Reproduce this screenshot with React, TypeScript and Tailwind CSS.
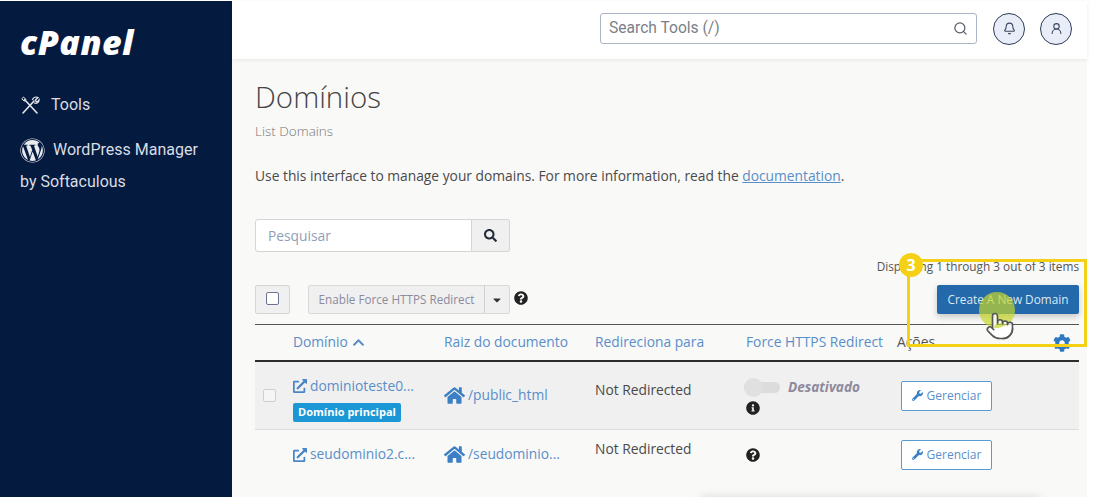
import React from 'react';
import { Bell, Pointer, Search, UserRound } from 'lucide-react';
import { FaCaretDown, FaChevronUp, FaCog, FaExternalLinkAlt, FaHome, FaInfoCircle, FaQuestionCircle, FaSearch, FaWordpress, FaWrench } from 'react-icons/fa';

const ToolsIcon = () => (
  <svg width="20" height="20" viewBox="0 0 20 20" fill="none" stroke="#e5e7eb" strokeWidth="1.6" strokeLinecap="round">
    <path d="M3 18 L14 6" />
    <path d="M12.5 4.5 C13.5 2.5 16 1.5 18 2.5 L15.5 5 L16 6.5 L17.5 7 L19 5 C19 7.5 16.5 9 14.5 8" strokeWidth="1.3" />
    <path d="M4.5 4.5 L17 18" />
    <path d="M2 3.5 L3.5 2 L6 4.5 L4.5 6 Z" strokeWidth="1" />
  </svg>
);

const Gerenciar = () => (
  <button className="flex h-[30px] w-[91px] items-center justify-center gap-1 rounded-[2px] border-[1.5px] border-[#5b9bd5] bg-white text-[12px] text-[#5a8ec9]">
    <FaWrench size={11} className="text-[#3d7fc4]" />
    Gerenciar
  </button>
);

const Sidebar = () => (
  <aside className="flex w-[232px] shrink-0 flex-col bg-[#051a3f] pl-5 font-['Roboto',sans-serif] text-[16px] text-[#d9dde4]">
    <div className="mt-[24px] font-['Open_Sans',sans-serif] text-[34px] leading-[34px] font-extrabold tracking-[0.5px] text-white italic">cPanel</div>
    <div className="mt-[34px] flex h-[24px] items-center gap-[11px]">
      <ToolsIcon />
      <span>Tools</span>
    </div>
    <div className="mt-[20px] flex h-[26px] items-center gap-[8px]">
      <FaWordpress size={25} className="text-[#e8eaee]" />
      <span>WordPress Manager</span>
    </div>
    <div className="mt-[7px] leading-[24px]">by Softaculous</div>
  </aside>
);

const Topbar = () => (
  <header className="flex h-[58px] shrink-0 items-center justify-end bg-white pr-[15px] pb-[3px] shadow-[0_1px_4px_rgba(0,0,0,0.08)]">
    <div className="flex h-[31px] w-[377px] items-center justify-between rounded-[3px] border border-[#a9b4c6] bg-white px-2 font-['Roboto',sans-serif] text-[15.6px] text-[#7b8087]">
      <span>Search Tools (/)</span>
      <Search size={15} className="text-[#555d68]" />
    </div>
    <div className="ml-4 flex h-8 w-8 items-center justify-center rounded-full border border-[#2f3b58] bg-[#e9edf8]">
      <Bell size={13} className="text-[#3c4660]" />
    </div>
    <div className="ml-[15px] flex h-8 w-8 items-center justify-center rounded-full border border-[#2f3b58] bg-[#e9edf8]">
      <UserRound size={13} className="text-[#3c4660]" />
    </div>
  </header>
);

const cols = 'grid grid-cols-[38px_151px_151px_151px_151px_1fr]';

export default function App() {
  return (
    <div className="relative h-[497px] w-[1097px] overflow-hidden bg-white font-['Open_Sans',sans-serif] text-[13.8px] text-[#4a4a4a]">
      <div className="flex h-[497px] w-[1087px] pt-px">
        <Sidebar />
        <div className="flex min-w-0 flex-1 flex-col bg-[#f9f9f8]">
          <Topbar />
          <main className="flex flex-1 flex-col pr-2 pl-[23px]">
            <h1 className="mt-[18px] text-[29.5px] leading-[40px] font-light text-[#444]">Domínios</h1>
            <p className="mt-[4px] text-[13.5px] leading-[20px] font-light text-[#777]">List Domains</p>
            <p className="mt-[25px] leading-[20px]">
              Use this interface to manage your domains. For more information, read the <span className="text-[#5a8ec9] underline">documentation</span>.
            </p>

            <div className="mt-[33px] flex h-[33px] w-[255px]">
              <div className="flex flex-1 items-center rounded-l-[3px] border border-[#d5d5d5] bg-white pt-[2px] pl-3 text-[#8fa0b8]">Pesquisar</div>
              <div className="flex w-[38px] items-center justify-center rounded-r-[3px] border border-l-0 border-[#d5d5d5] bg-[#f0f0f0]">
                <FaSearch size={13} className="text-[#222c3a]" />
              </div>
            </div>

            <div className="mt-[6px] text-right text-[11.8px] leading-[16px] text-[#555]">Displaying 1 through 3 out of 3 items</div>

            <div className="mt-[11px] flex h-[39px] items-start justify-between">
              <div className="flex items-start">
                <div className="flex h-[29px] w-[35px] items-center justify-center rounded-[2px] border border-[#d5d5d5] bg-[#f0f0f0] pb-[3px]">
                  <div className="h-[13px] w-[13px] rounded-[2px] border border-[#6b7390] bg-white" />
                </div>
                <div className="ml-[18px] flex h-[29px] w-[202px] items-center rounded-[2px] border border-[#d9d9d9] bg-[#f0f0f0] text-[11.7px] text-[#8d8a9c]">
                  <span className="flex-1 text-center">Enable Force HTTPS Redirect</span>
                  <span className="flex h-full w-[25px] items-center justify-center border-l border-[#d0d0d0] text-[#333]">
                    <FaCaretDown size={12} />
                  </span>
                </div>
                <FaQuestionCircle size={14} className="mt-[6px] ml-[4px] text-[#222]" />
              </div>
              <button className="h-[29px] w-[142px] rounded-[2px] bg-[#2469aa] text-[11.8px] text-[#dfe8f2] shadow-[0_3px_6px_rgba(0,0,0,0.2)]">Create A New Domain</button>
            </div>

            <div className={`${cols} h-[38px] items-center border-t border-b-2 border-t-[#555] border-b-[#2c2c2c] text-[#5a8ec9]`}>
              <span />
              <span className="flex items-center gap-1">
                Domínio <FaChevronUp size={13} />
              </span>
              <span>Raiz do documento</span>
              <span>Redireciona para</span>
              <span>Force HTTPS Redirect</span>
              <span className="flex items-center justify-between pr-[8px] text-[#555]">
                Ações <FaCog size={18} className="text-[#2f78c2]" />
              </span>
            </div>

            <div className={`${cols} h-[68px] border-b border-[#dedede] bg-[#f0f0f0]`}>
              <div className="flex items-center justify-center">
                <div className="mr-[10px] h-[13px] w-[13px] rounded-[2px] border border-[#cfcfcf] bg-[#f5f5f5]" />
              </div>
              <div className="pt-[12px]">
                <div className="flex h-[24px] items-center gap-[3px] text-[#5a8ec9]">
                  <FaExternalLinkAlt size={14} className="text-[#4a86c7]" />
                  dominioteste0...
                </div>
                <div className="mt-[5px] flex h-[19px] w-[108px] items-center justify-center rounded-[2px] bg-[#1b97d5] text-[11px] font-bold text-white">Domínio principal</div>
              </div>
              <div className="flex items-center gap-[3px] text-[#5a8ec9]">
                <FaHome size={21} className="text-[#3d7fc4]" />
                /public_html
              </div>
              <div className="pt-[18px] leading-[20px]">Not Redirected</div>
              <div className="pt-[16px]">
                <div className="flex items-center gap-2">
                  <div className="relative ml-[-2px] h-[11px] w-[36px] rounded-full bg-[#dcdcdc]">
                    <div className="absolute top-[-4px] left-0 h-[19px] w-[19px] rounded-full bg-[#e0e0e0]" />
                  </div>
                  <span className="text-[13.6px] leading-[18px] font-bold text-[#8d8a9c] italic">Desativado</span>
                </div>
                <FaInfoCircle size={14} className="mt-[5px] text-[#222]" />
              </div>
              <div className="flex items-center pl-[4px]">
                <Gerenciar />
              </div>
            </div>

            <div className={`${cols} h-[49px]`}>
              <span />
              <div className="flex items-center gap-[3px] text-[#5a8ec9]">
                <FaExternalLinkAlt size={14} className="text-[#4a86c7]" />
                seudominio2.c...
              </div>
              <div className="flex items-center gap-[3px] text-[#5a8ec9]">
                <FaHome size={21} className="text-[#3d7fc4]" />
                /seudominio...
              </div>
              <div className="pt-[9px] leading-[20px]">Not Redirected</div>
              <div className="flex items-center">
                <FaQuestionCircle size={14} className="text-[#222]" />
              </div>
              <div className="flex items-center pl-[4px]">
                <Gerenciar />
              </div>
            </div>
          </main>
        </div>
      </div>

      {/* highlight drawn over the page */}
      <div className="absolute top-[259px] left-[907px] h-[88px] w-[180px] border-[3px] border-[#f4d115]" />
      <div className="absolute top-[253px] left-[899px] flex h-[24px] w-[24px] items-center justify-center rounded-full bg-[#f4d115] text-[16px] font-bold text-white">3</div>
      <div className="absolute top-[292px] left-[979px] h-[36px] w-[36px] rounded-full bg-[#c6d52a]/70" />
      <Pointer size={30} strokeWidth={1.3} className="absolute top-[311px] left-[985px] fill-white/80 text-[#555]" />
      <div className="absolute top-[500px] left-[700px] h-[6px] w-[340px] rounded-full bg-white shadow-[0_-2px_10px_rgba(0,0,0,0.18)]" />
    </div>
  );
}
